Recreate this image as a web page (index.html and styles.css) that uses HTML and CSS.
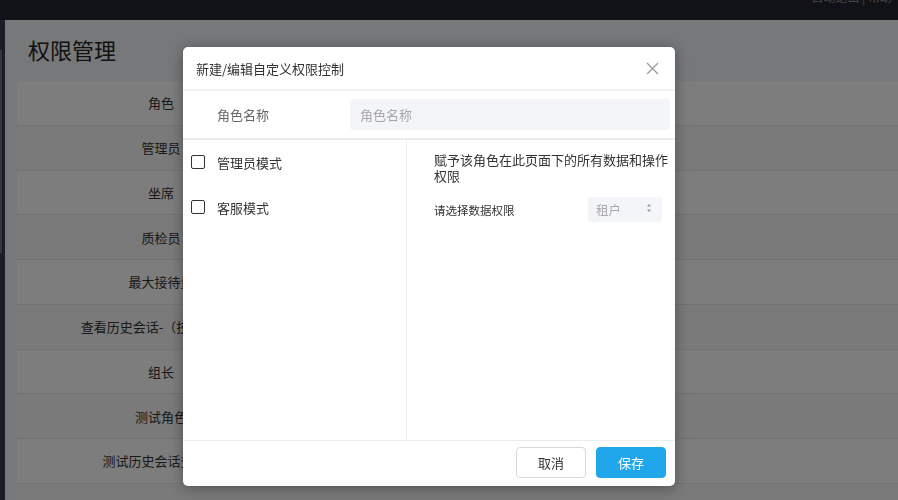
FILE: index.html
```html
<!DOCTYPE html>
<html lang="zh">
<head>
<meta charset="utf-8">
<link rel="stylesheet" href="styles.css">
</head>
<body>
<div class="app">
  <header class="topbar"><span class="user">自动退出 | 帮助</span></header>
  <div class="main">
    <aside class="sidebar"><div class="side-edge"></div></aside>
    <section class="card">
      <h1 class="page-title">权限管理</h1>
      <div class="table">
        <div class="row head"><div class="cell">角色</div></div>
        <div class="row"><div class="cell">管理员</div></div>
        <div class="row"><div class="cell">坐席</div></div>
        <div class="row"><div class="cell">质检员</div></div>
        <div class="row"><div class="cell">最大接待量</div></div>
        <div class="row"><div class="cell">查看历史会话-（技术支持）</div></div>
        <div class="row"><div class="cell">组长</div></div>
        <div class="row"><div class="cell">测试角色</div></div>
        <div class="row"><div class="cell">测试历史会话查看组</div></div>
        <div class="row"><div class="cell"></div></div>
      </div>
    </section>
  </div>
</div>
<div class="mask"></div>
<div class="modal">
  <div class="modal-head">
    <span class="modal-title">新建/编辑自定义权限控制</span>
    <svg class="close" width="13" height="13" viewBox="0 0 13 13"><path d="M1 1L12 12M12 1L1 12" stroke="#9a9a9a" stroke-width="1.3" fill="none"/></svg>
  </div>
  <div class="name-row">
    <span class="name-label">角色名称</span>
    <div class="name-input">角色名称</div>
  </div>
  <div class="modal-body">
    <div class="modes">
      <label class="mode"><span class="box"></span><span>管理员模式</span></label>
      <label class="mode"><span class="box"></span><span>客服模式</span></label>
    </div>
    <div class="detail">
      <p class="desc">赋予该角色在此页面下的所有数据和操作权限</p>
      <div class="perm-row">
        <span class="perm-label">请选择数据权限</span>
        <div class="select"><span>租户</span>
          <svg width="6" height="10" viewBox="0 0 6 10"><path d="M3 1L5 3.5H1Z M3 9L5 6.5H1Z" fill="#999"/></svg>
        </div>
      </div>
    </div>
  </div>
  <div class="modal-foot">
    <button class="btn cancel">取消</button>
    <button class="btn save">保存</button>
  </div>
</div>
</body>
</html>
```
FILE: styles.css
```css
* { box-sizing: border-box; }
html, body { margin: 0; padding: 0; }
body {
  width: 898px; height: 500px; overflow: hidden;
  font-family: "Noto Sans CJK SC", "Noto Sans", sans-serif;
  background: #eceef4;
}
.app { display: flex; flex-direction: column; height: 500px; overflow: hidden; }
.topbar {
  height: 20px; background: #22252f; flex: none;
  display: flex; justify-content: flex-end; overflow: hidden;
}
.user { color: #8a8c92; font-size: 12px; line-height: 12px; margin-top: -9px; margin-right: 6px; }
.main { flex: 1; min-height: 0; display: flex; background: #eceef4; overflow: hidden; }
.sidebar { width: 5px; background: #363b4f; flex: none; padding-top: 30px; }
.side-edge { width: 2px; height: 203px; background: #6a6f80; }
.card {
  flex: 1; background: #eef0f5; border-top-left-radius: 6px;
  padding: 13px 0 0 12px; overflow: hidden;
}
.page-title {
  margin: 0 0 0 11px; font-size: 22px; font-weight: 400; color: #222;
  line-height: 32px; height: 48px;
}
.table { background: #fafafa; border-top-left-radius: 4px; }
.row { height: 44.75px; border-bottom: 1px solid #e4e4e4; display: flex; align-items: center; }
.row:nth-child(even) { background: #f4f4f4; }
.cell {
  width: 288px; text-align: center; font-size: 13px; color: #333;
  white-space: nowrap; flex: none;
}
.mask { position: fixed; inset: 0; background: rgba(0,0,0,0.5); }
.modal {
  position: absolute; left: 183px; top: 47px; width: 492px; height: 439px;
  background: #fff; border-radius: 5px; box-shadow: 0 2px 14px rgba(0,0,0,0.35);
  display: flex; flex-direction: column; overflow: hidden;
}
.modal-head {
  height: 44px; flex: none; display: flex; align-items: center; justify-content: space-between;
  padding: 0 16px 0 13px; border-bottom: 2px solid #f2f2f2;
}
.modal-title { font-size: 13px; color: #333; }
.close { display: block; }
.name-row {
  height: 49px; flex: none; display: flex; align-items: center;
  border-bottom: 2px solid #ececec; padding: 0 5px 0 34px;
}
.name-label { width: 133px; font-size: 13px; color: #666; }
.name-input {
  flex: 1; height: 31px; background: #f4f5f8; border-radius: 3px;
  display: flex; align-items: center; padding-left: 10px; font-size: 13px; color: #a8a8a8;
}
.modal-body { flex: 1; display: flex; }
.modes { width: 224px; border-right: 1px solid #ececec; padding: 11px 0 0 8px; }
.mode { display: flex; align-items: center; height: 22px; margin-bottom: 23px; font-size: 13px; color: #333; }
.box {
  width: 14px; height: 14px; border: 1.5px solid #333; border-radius: 2px;
  margin-right: 12px; margin-top: -1px; flex: none;
}
.detail { flex: 1; padding: 12px 0 0 27px; }
.desc { margin: 0; width: 240px; font-size: 13px; line-height: 16px; color: #333; }
.perm-row { display: flex; align-items: center; justify-content: space-between; margin-top: 13px; padding-right: 13px; }
.perm-label { font-size: 11.5px; color: #333; }
.select {
  width: 74px; height: 25px; background: #f4f5f8; border-radius: 4px;
  display: flex; align-items: center; justify-content: space-between;
  padding: 0 10px 0 8px; font-size: 12.5px; color: #aaa;
}
.select svg { margin-top: -3px; }
.modal-foot {
  height: 46px; flex: none; border-top: 1px solid #ececec;
  display: flex; justify-content: flex-end; align-items: flex-start; gap: 10px;
  padding: 6px 9px 0 0;
}
.btn {
  width: 70px; height: 31px; border-radius: 4px; font-size: 13px;
  font-family: inherit; padding: 0;
}
.cancel { background: #fff; border: 1px solid #d8d8d8; color: #333; }
.save { background: #1fa6eb; border: 1px solid #1fa6eb; color: #fff; }
```
